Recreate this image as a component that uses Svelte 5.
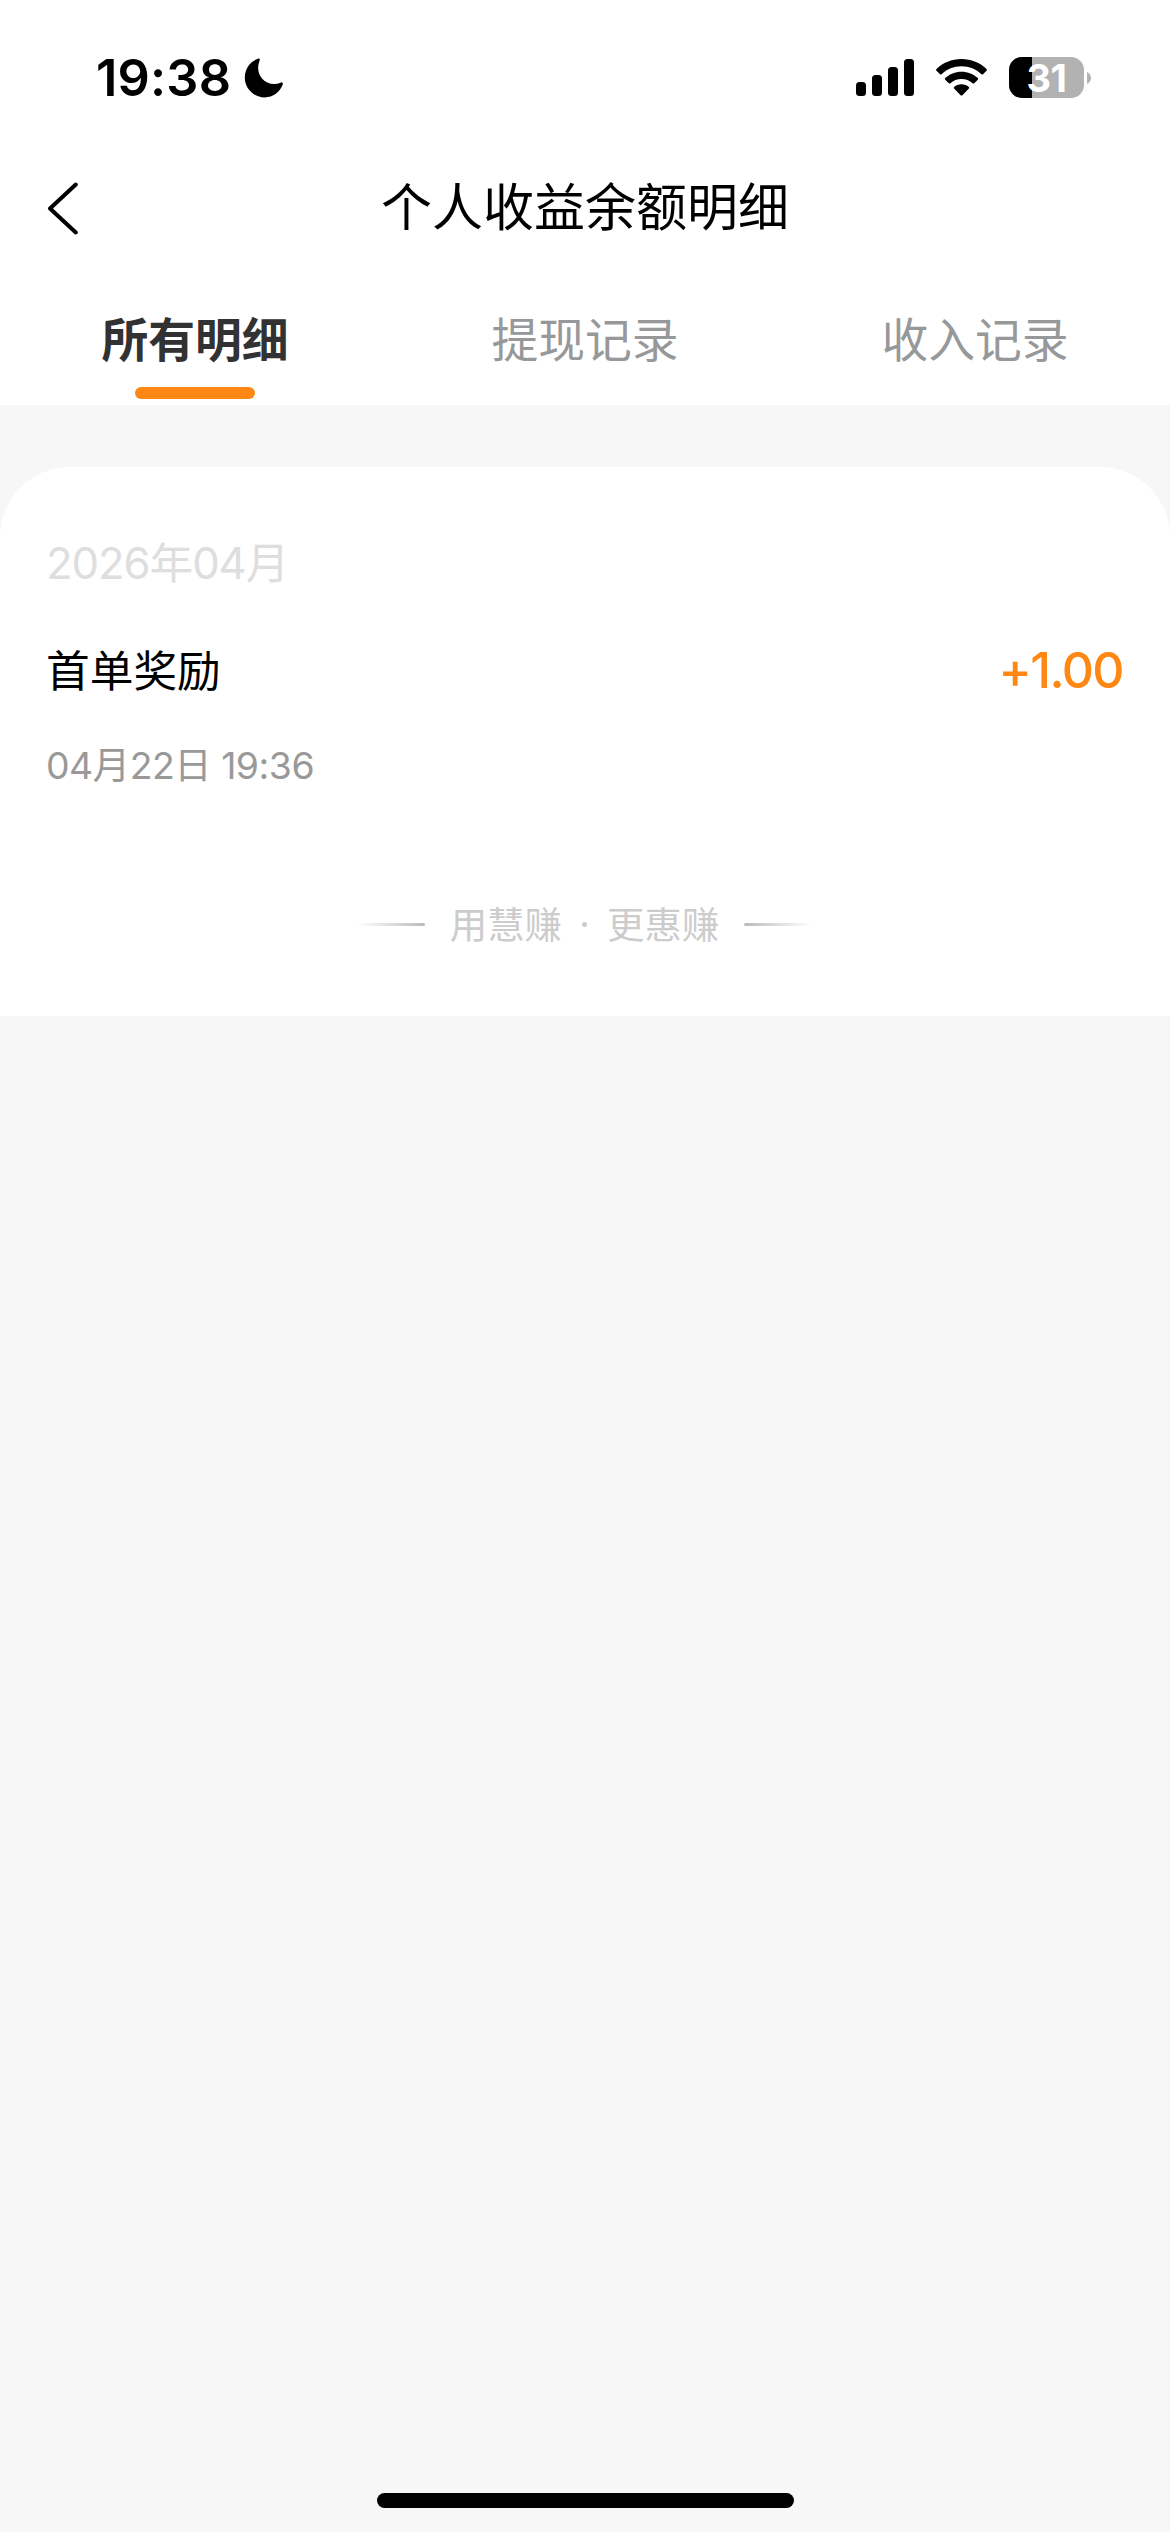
<script lang="ts">
    const tabs: { key: string; label: string }[] = [
        { key: 'all', label: '所有明细' },
        { key: 'withdraw', label: '提现记录' },
        { key: 'income', label: '收入记录' }
    ];

    const months = [
        {
            title: '2026年04月',
            records: [{ name: '首单奖励', time: '04月22日 19:36', amount: '+1.00' }]
        }
    ];

    let active = 'all';
    const battery = 31;
</script>

<div class="page">
    <header class="top">
        <div class="status-bar">
            <div class="status-left">
                <span class="clock">19:38</span>
                <svg class="moon" width="40" height="40" viewBox="0 0 40 40">
                    <path d="M14.3 .5C15.6 .1 16.1 1.2 15.6 2.4C13.2 8.5 13.6 15 17.8 20.3C22.2 25.6 29.5 27.6 36.6 24.8C38.1 24.2 39.2 24.9 38.8 26.3C36.2 34 29 39.4 20.7 39.4C9.7 39.4 .8 30.6 .8 19.6C.8 10.7 6.3 3.3 14.3 .5Z" />
                </svg>
            </div>
            <div class="status-right">
                <svg width="58" height="37" viewBox="0 0 58 37">
                    <rect x="0" y="23" width="10" height="14" rx="3.5" />
                    <rect x="16" y="16" width="10" height="21" rx="3.5" />
                    <rect x="32" y="8" width="10" height="29" rx="3.5" />
                    <rect x="48" y="0" width="10" height="37" rx="3.5" />
                </svg>
                <svg class="wifi" width="51" height="37" viewBox="0 0 51 37">
                    <path d="M25.5 0C35.3 0 44.2 3.8 50.5 10Q51.3 10.9 50.5 11.7L47 15.2Q46.2 15.9 45.4 15.2C40.2 10.2 33.2 7.3 25.5 7.3S10.8 10.2 5.6 15.2Q4.8 15.9 4 15.2L.5 11.7Q-.3 10.9 .5 10C6.8 3.8 15.7 0 25.5 0Z" />
                    <path d="M25.5 12.8C31.8 12.8 37.5 15.2 41.8 19.1Q42.6 19.9 41.8 20.7L38.2 24.2Q37.4 24.9 36.6 24.2C33.6 21.6 29.8 20 25.5 20S17.4 21.6 14.4 24.2Q13.6 24.9 12.8 24.2L9.2 20.7Q8.4 19.9 9.2 19.1C13.5 15.2 19.2 12.8 25.5 12.8Z" />
                    <path d="M25.5 25.3C28.3 25.3 30.9 26.3 32.9 28.1Q33.7 28.8 32.9 29.6L26.4 36.2Q25.5 37 24.6 36.2L18.1 29.6Q17.3 28.8 18.1 28.1C20.1 26.3 22.7 25.3 25.5 25.3Z" />
                </svg>
                <div class="battery">
                    <div class="battery-body">
                        <div class="battery-level" style={`width: ${battery}%`}></div>
                        <span class="battery-text">{battery}</span>
                    </div>
                    <svg width="4" height="12" viewBox="0 0 4 12">
                        <path d="M0 0C2.4 1.2 4 3.3 4 6S2.4 10.8 0 12Z" fill="#b2b2b2" />
                    </svg>
                </div>
            </div>
        </div>

        <div class="nav-bar">
            <button class="back" aria-label="返回">
                <svg width="32" height="54" viewBox="0 0 32 54">
                    <path d="M28.8 3.5L3 27.5L28.8 51.5" fill="none" stroke="#000" stroke-width="4" stroke-linecap="round" stroke-linejoin="round" />
                </svg>
            </button>
            <h1>个人收益余额明细</h1>
        </div>

        <nav class="tabs">
            {#each tabs as tab}
                <button class="tab" class:active={active === tab.key} on:click={() => (active = tab.key)}>
                    <span>{tab.label}</span>
                    <i class="bar"></i>
                </button>
            {/each}
        </nav>
    </header>

    <main class="card">
        {#each months as month}
            <h2>{month.title}</h2>
            {#each month.records as record}
                <div class="record">
                    <div class="record-row">
                        <span class="name">{record.name}</span>
                        <span class="amount">{record.amount}</span>
                    </div>
                    <div class="time">{record.time}</div>
                </div>
            {/each}
        {/each}

        <footer class="slogan">
            <i class="line"></i>
            <span>用慧赚</span><b></b><span>更惠赚</span>
            <i class="line right"></i>
        </footer>
    </main>

    <div class="home-indicator"></div>
</div>

<style>
    :global(body) {
        margin: 0;
        background: #f7f7f7;
    }

    .page {
        width: 1170px; height: 2532px;
        box-sizing: border-box;
        display: flex; flex-direction: column;
        background: #f7f7f7;
        font-family: Inter, 'Noto Sans CJK SC', sans-serif;
        color: #000;
        overflow: hidden;
    }

    button {
        background: none; border: none;
        padding: 0; margin: 0;
        font-family: inherit; cursor: pointer;
    }

    .top { height: 405px; background: #fff; }

    .status-bar {
        height: 156px;
        box-sizing: border-box;
        padding: 0 79px 0 96px;
        display: flex; justify-content: space-between;
    }
    .status-left {
        display: flex; align-items: center;
        gap: 12px; height: 156px;
    }
    .clock {
        font-size: 50.5px; font-weight: 600;
        line-height: 60px; letter-spacing: .2px;
        width: 136px; white-space: nowrap;
    }
    .status-right {
        display: flex; align-items: center;
        height: 155px;
    }
    .wifi { margin: 0 22px; }
    .battery { display: flex; align-items: center; gap: 3px; }
    .battery-body {
        display: grid; align-items: center;
        width: 75px; height: 41px;
        border-radius: 13px;
        background: #b2b2b2;
    }
    .battery-level {
        grid-area: 1 / 1;
        height: 41px;
        border-radius: 13px 0 0 13px;
        background: #000;
    }
    .battery-text {
        grid-area: 1 / 1;
        color: #fff; text-align: center;
        font-size: 38px; font-weight: 700;
        line-height: 48px; letter-spacing: -.5px;
        margin: -4px 0;
    }

    .nav-bar {
        height: 104px;
        padding: 0 47px;
        display: grid;
        grid-template-columns: 32px 1fr 32px;
        align-items: center;
    }
    .back { height: 54px; }
    .back svg { display: block; }
    h1 {
        margin: 0; text-align: center;
        font-size: 51px; font-weight: 400;
        line-height: 60px;
    }

    .tabs {
        height: 145px;
        display: grid;
        grid-template-columns: repeat(3, 1fr);
    }
    .tab {
        display: flex; flex-direction: column;
        align-items: center;
        padding-top: 45px;
        color: #979899;
        font-size: 46.8px; line-height: 70px;
    }
    .tab.active { color: #323233; font-weight: 700; }
    .bar {
        width: 120px; height: 12px;
        margin-top: 12px; border-radius: 6px;
    }
    .tab.active .bar { background: #ff8713; }

    .card {
        height: 549px;
        margin-top: 62px;
        padding: 66px 47px 0 46px;
        box-sizing: border-box;
        background: #fff;
        border-radius: 70px 70px 0 0;
    }
    h2 {
        margin: 0;
        font-size: 43.7px; font-weight: 400;
        line-height: 62px; color: #dedede;
        letter-spacing: -1.1px;
    }
    .record { margin-top: 41px; }
    .record-row {
        display: flex; justify-content: space-between; align-items: center;
        height: 70px;
    }
    .name {
        font-size: 43.7px; line-height: 62px;
        padding-top: 2px;
    }
    .amount {
        font-size: 50px; font-weight: 500;
        line-height: 62px; color: #ff8713;
        letter-spacing: -1.6px;
        padding-bottom: 2px;
    }
    .time {
        margin-top: 33px;
        font-size: 37.4px; line-height: 54px;
        font-weight: 400; color: #999;
        letter-spacing: -.5px;
    }

    .slogan {
        margin-top: 103px;
        display: flex; align-items: center; justify-content: center;
        font-size: 37.4px; line-height: 54px;
        color: #ccc;
    }
    .slogan span { padding-top: 3px; }
    .slogan b {
        width: 5px; height: 5px;
        margin: 0 20px; border-radius: 50%;
        background: #ccc;
    }
    .line {
        width: 68px; height: 3px;
        margin-right: 25px; border-radius: 2px;
        background: linear-gradient(to right, #fff, #bbb);
    }
    .line.right {
        margin: 0 0 0 25px;
        background: linear-gradient(to left, #fff, #bbb);
    }

    .home-indicator {
        width: 417px; height: 15px;
        margin: auto auto 24px;
        border-radius: 8px;
        background: #000;
    }
</style>
